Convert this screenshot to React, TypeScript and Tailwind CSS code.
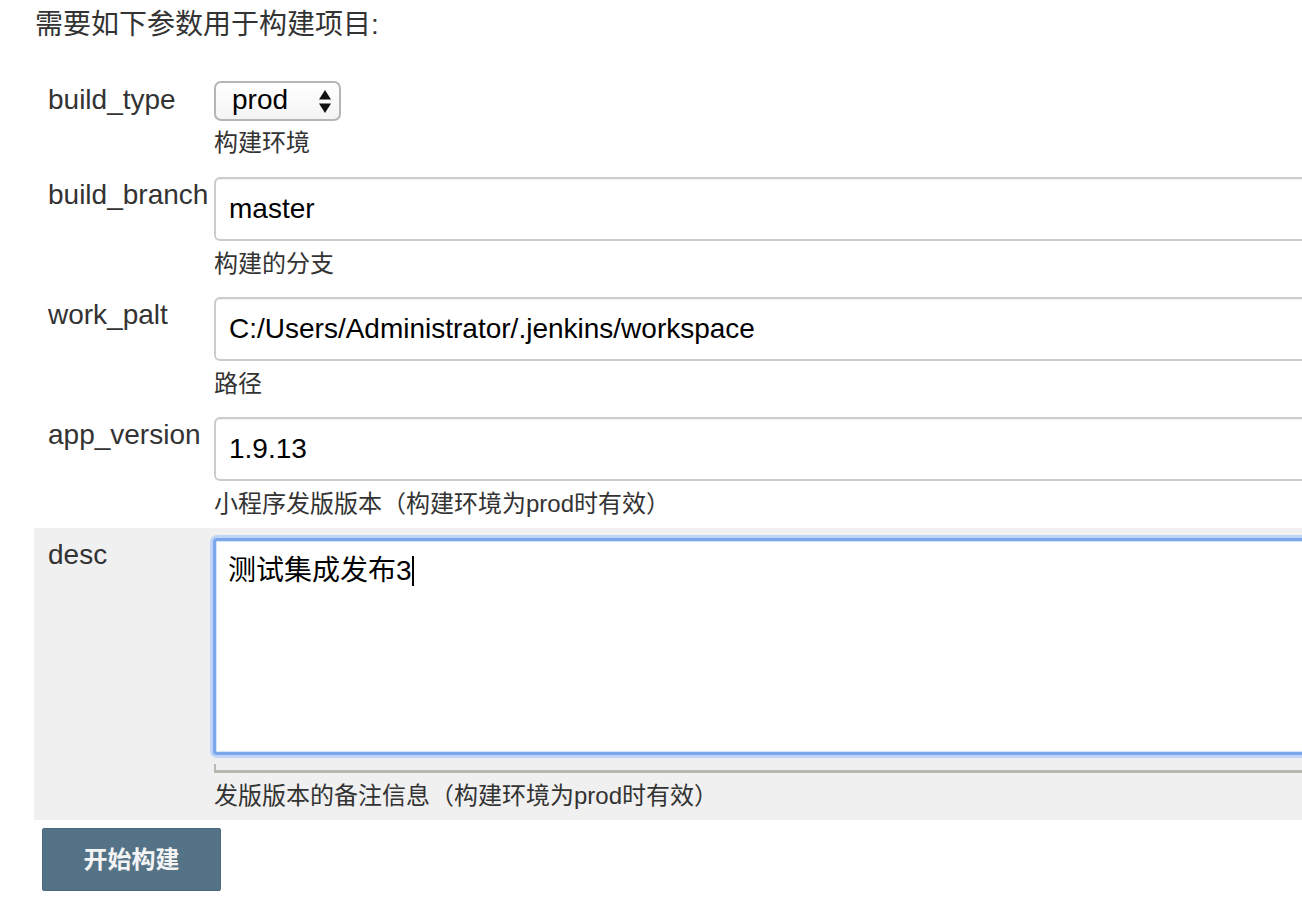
import React from "react";

const font = {
  fontFamily: '"Liberation Sans", Arial, "Noto Sans CJK SC", sans-serif',
};

function Row({
  label,
  help,
  children,
}: {
  label: string;
  help: string;
  children: React.ReactNode;
}) {
  return (
    <div className="flex">
      <div className="w-[180px] shrink-0 pl-[14px] pt-[11px] text-[28px] leading-[32px] text-[#333]">
        {label}
      </div>
      <div className="flex-1 pt-[9px] pb-[8px]">
        {children}
        <div className="mt-[7px] text-[24px] leading-[32px] text-[#333]">{help}</div>
      </div>
    </div>
  );
}

function TextInput({ value }: { value: string }) {
  return (
    <div className="h-[64px] w-[1200px] rounded-[6px] border-2 border-[#cccccc] bg-white pl-[13px] flex items-center text-[28px] text-black shadow-[inset_0_1px_1px_rgba(0,0,0,0.06)]">
      {value}
    </div>
  );
}

export default function App() {
  return (
    <div className="w-[1302px] h-[918px] overflow-hidden bg-white" style={font}>
      <div className="pl-[34px]">
        <div className="pt-[9px] pl-[1px] text-[28px] leading-[32px] text-[#333]">
          需要如下参数用于构建项目:
        </div>
        <div className="mt-[31px] w-[1400px]">
          {/* build_type */}
          <div className="flex">
            <div className="w-[180px] shrink-0 pl-[14px] pt-[12px] text-[28px] leading-[32px] text-[#333]">
              build_type
            </div>
            <div className="flex-1 pt-[9px] pb-[9px]">
              <div className="flex h-[40px] w-[127px] items-center justify-between rounded-[7px] border-2 border-[#b5b5b5] bg-gradient-to-b from-white to-[#f4f4f4] pl-[16px] pr-[7px] text-[28px] text-black">
                <span className="leading-none -mt-[2px]">prod</span>
                <svg width="14" height="25" viewBox="0 0 14 25">
                  <polygon points="7,1 13,10.5 1,10.5" fill="#111" />
                  <polygon points="7,24 13,14.5 1,14.5" fill="#111" />
                </svg>
              </div>
              <div className="mt-[6px] text-[24px] leading-[32px] text-[#333]">构建环境</div>
            </div>
          </div>

          <Row label="build_branch" help="构建的分支">
            <TextInput value="master" />
          </Row>
          <Row label="work_palt" help="路径">
            <TextInput value="C:/Users/Administrator/.jenkins/workspace" />
          </Row>
          <Row label="app_version" help="小程序发版版本（构建环境为prod时有效）">
            <TextInput value="1.9.13" />
          </Row>

          {/* desc */}
          <div className="flex bg-[#f0f0f0]">
            <div className="w-[180px] shrink-0 pl-[14px] pt-[11px] text-[28px] leading-[32px] text-[#333]">
              desc
            </div>
            <div className="flex-1 pt-[10px] pb-[8px] -ml-[1px]">
              <div className="h-[217px] w-[1200px] rounded-[4px] border-[3px] border-[#7ba7ec] bg-white pl-[12px] pt-[14px] text-[28px] leading-[32px] text-black shadow-[0_0_0_3px_#bed5f7,inset_0_0_0_1px_#d3e3fa]">
                测试集成发布3
                <span className="inline-block h-[30px] w-[2px] bg-black align-[-6px]" />
              </div>
              <div className="mt-[9px] ml-[1px] h-[9px] w-[1200px] border-l-2 border-b-[3px] border-[#b9b9b1]" />
              <div className="mt-[7px] ml-[1px] text-[24px] leading-[32px] text-[#333]">
                发版版本的备注信息（构建环境为prod时有效）
              </div>
            </div>
          </div>
        </div>

        <button className="ml-[8px] mt-[8px] flex h-[63px] w-[179px] items-center justify-center rounded-[2px] border border-[#4b697c] bg-[#557387] text-[24px] font-semibold text-[#f4f4f4]">
          开始构建
        </button>
      </div>
    </div>
  );
}
